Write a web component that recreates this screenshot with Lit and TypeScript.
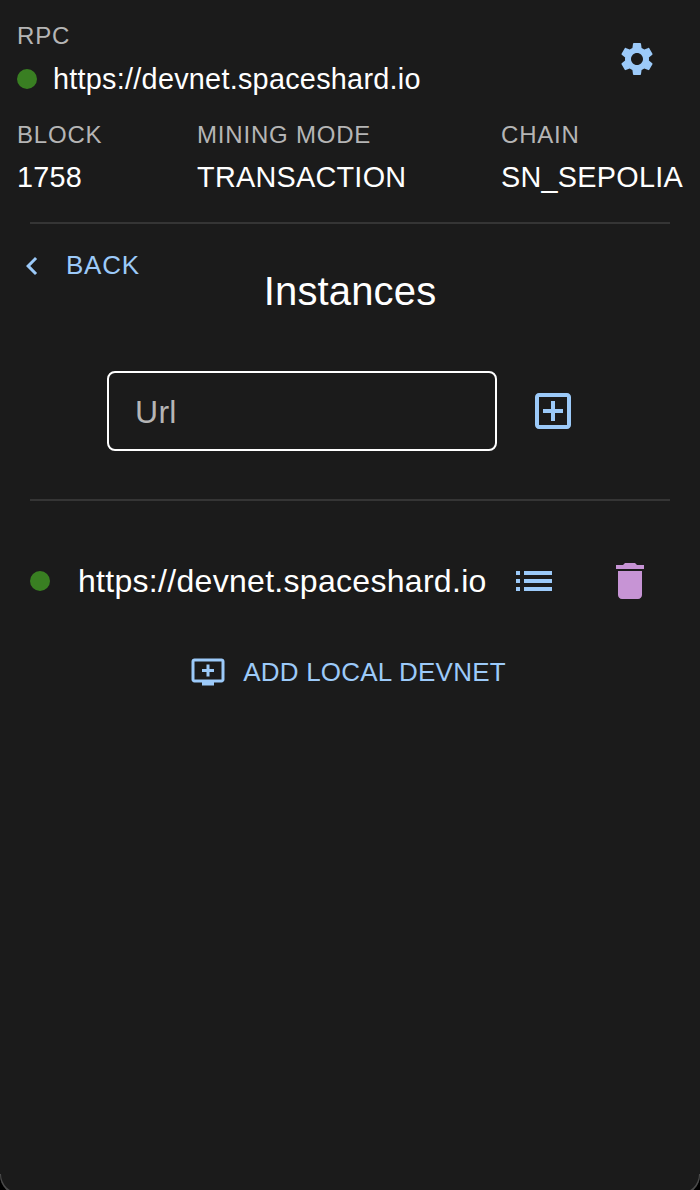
import { LitElement, html, css, svg } from "lit";
import { customElement, property } from "lit/decorators.js";

const ICONS: Record<string, string> = {
  settings:
    "M19.14 12.94c.04-.3.06-.61.06-.94 0-.32-.02-.64-.07-.94l2.03-1.58c.18-.14.23-.41.12-.61l-1.92-3.32c-.12-.22-.37-.29-.59-.22l-2.39.96c-.5-.38-1.03-.7-1.62-.94l-.36-2.54c-.04-.24-.24-.41-.48-.41h-3.84c-.24 0-.43.17-.47.41l-.36 2.54c-.59.24-1.13.57-1.62.94l-2.39-.96c-.22-.08-.47 0-.59.22L2.74 8.87c-.12.21-.08.47.12.61l2.03 1.58c-.05.3-.09.63-.09.94s.02.64.07.94l-2.03 1.58c-.18.14-.23.41-.12.61l1.92 3.32c.12.22.37.29.59.22l2.39-.96c.5.38 1.03.7 1.62.94l.36 2.54c.05.24.24.41.48.41h3.84c.24 0 .44-.17.47-.41l.36-2.54c.59-.24 1.13-.56 1.62-.94l2.39.96c.22.08.47 0 .59-.22l1.92-3.32c.12-.22.07-.47-.12-.61l-2.01-1.58zM12 15.6c-1.98 0-3.6-1.62-3.6-3.6s1.62-3.6 3.6-3.6 3.6 1.62 3.6 3.6-1.62 3.6-3.6 3.6z",
  back: "M15.41 16.59 10.83 12l4.58-4.59L14 6l-6 6 6 6z",
  add: "M19 3H5c-1.11 0-2 .9-2 2v14c0 1.1.89 2 2 2h14c1.1 0 2-.9 2-2V5c0-1.1-.9-2-2-2zm0 16H5V5h14v14zm-8-2h2v-4h4v-2h-4V7h-2v4H7v2h4z",
  list: "M3 13h2v-2H3v2zm0 4h2v-2H3v2zm0-8h2V7H3v2zm4 4h14v-2H7v2zm0 4h14v-2H7v2zM7 7v2h14V7H7z",
  trash: "M6 19c0 1.1.9 2 2 2h8c1.1 0 2-.9 2-2V7H6v12zM19 4h-3.5l-1-1h-5l-1 1H5v2h14V4z",
  queue:
    "M21 3H3c-1.11 0-2 .89-2 2v12c0 1.1.89 2 2 2h5v2h8v-2h5c1.1 0 1.99-.9 1.99-2L23 5c0-1.11-.9-2-2-2zm0 14H3V5h18v12zm-5-7v2h-3v3h-2v-3H8v-2h3V7h2v3h3z",
};

@customElement("ui-icon")
class UiIcon extends LitElement {
  @property() name = "";
  static styles = css`
    :host { display: block; width: 48px; height: 48px; flex: none; }
    svg { display: block; width: 100%; height: 100%; fill: currentColor; }
  `;
  render() {
    return html`<svg viewBox="0 0 24 24">${svg`<path d=${ICONS[this.name]}></path>`}</svg>`;
  }
}

@customElement("app-root")
class AppRoot extends LitElement {
  static styles = css`
    :host {
      display: block;
      height: 1190px;
      overflow: hidden;
      background: #000;
      color: #fff;
      font-family: "Liberation Sans", Arial, sans-serif;
    }
    * { box-sizing: border-box; }
    .window {
      height: 1195px;
      background: #1b1b1b;
      border-radius: 0 0 20px 20px;
      box-shadow: inset 0 -1px 0 1px #4a4a4a;
    }
    .panel { height: 1174px; background: #1b1b1b; }
    button { all: unset; display: flex; align-items: center; color: #9ccaf9; cursor: pointer; }
    .header { height: 222px; padding: 16px 17px 0; }
    .top { display: flex; justify-content: space-between; height: 99px; }
    .label { font-size: 24px; line-height: 40px; letter-spacing: 0.8px; color: #b5b5b5; }
    .value { font-size: 28.8px; line-height: 44px; letter-spacing: 0.27px; white-space: nowrap; }
    .rpc { display: flex; align-items: center; gap: 16px; padding-top: 1px; }
    .dot { width: 20px; height: 20px; border-radius: 50%; background: #397f22; flex: none; }
    .gear { align-self: flex-start; margin: 23px 26px 0 0; }
    .gear ui-icon { width: 40px; height: 40px; }
    .stats { display: flex; justify-content: space-between; }
    .rule { height: 2px; margin: 0 30px; background: #353535; }
    .title-row { display: grid; grid-template-columns: 1fr auto 1fr; height: 147px; padding: 24px 14px 0; align-items: start; }
    .btn { font-size: 26px; line-height: 36px; letter-spacing: 0.74px; }
    .back { gap: 16px; justify-self: start; }
    .back span { padding-bottom: 2px; line-height: 34px; }
    .back ui-icon, .local ui-icon { width: 36px; height: 36px; }
    h1 { margin: 13px 0 0; font-size: 40px; line-height: 60px; font-weight: 400; letter-spacing: 0.15px; }
    .form { display: flex; align-items: center; gap: 32px; height: 80px; margin: 0 0 48px 107px; }
    input {
      width: 390px; height: 80px; padding: 2px 26px 0; border: 2px solid #fff; border-radius: 8px;
      background: transparent; color: #fff; font: 32px "Liberation Sans", Arial, sans-serif;
      letter-spacing: 0.3px; outline: none;
    }
    input::placeholder { color: #b5b5b5; opacity: 1; }
    .item { display: flex; align-items: center; height: 48px; margin: 56px 46px 0 30px; }
    .url { margin: 0 auto 0 28px; font-size: 32px; line-height: 48px; letter-spacing: 0.3px; }
    .actions { display: flex; gap: 48px; }
    .del { color: #c794d5; }
    .local { gap: 17px; margin: 49px auto 0; width: max-content; padding-right: 4px; letter-spacing: 0.22px; }
  `;

  render() {
    return html`
      <div class="window">
        <div class="panel">
          <header class="header">
            <div class="top">
              <div>
                <div class="label">RPC</div>
                <div class="rpc value"><span class="dot"></span><span>https://devnet.spaceshard.io</span></div>
              </div>
              <button class="gear" aria-label="Settings"><ui-icon name="settings"></ui-icon></button>
            </div>
            <div class="stats">
              ${[["BLOCK", "1758"], ["MINING MODE", "TRANSACTION"], ["CHAIN", "SN_SEPOLIA"]].map(
                ([k, v]) => html`<div><div class="label">${k}</div><div class="value">${v}</div></div>`
              )}
            </div>
          </header>
          <div class="rule"></div>
          <div class="title-row">
            <button class="btn back"><ui-icon name="back"></ui-icon><span>BACK</span></button>
            <h1>Instances</h1>
          </div>
          <div class="form">
            <input placeholder="Url" />
            <button aria-label="Add"><ui-icon name="add"></ui-icon></button>
          </div>
          <div class="rule"></div>
          <div class="item">
            <span class="dot"></span>
            <span class="url">https://devnet.spaceshard.io</span>
            <div class="actions">
              <button aria-label="Details"><ui-icon name="list"></ui-icon></button>
              <button class="del" aria-label="Delete"><ui-icon name="trash"></ui-icon></button>
            </div>
          </div>
          <button class="btn local"><ui-icon name="queue"></ui-icon><span>ADD LOCAL DEVNET</span></button>
        </div>
      </div>
    `;
  }
}
